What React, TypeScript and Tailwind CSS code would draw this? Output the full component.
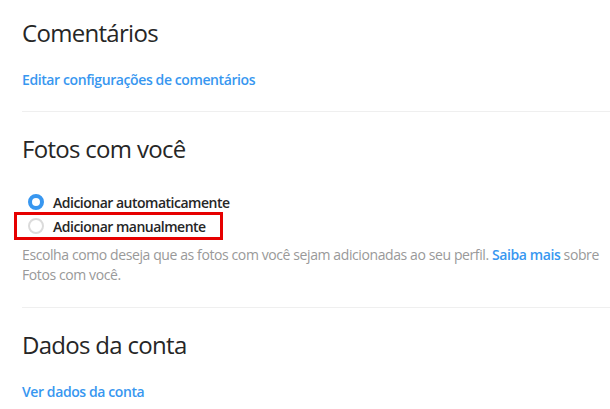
import React from 'react';

const font = { fontFamily: '"Open Sans", "Noto Sans", sans-serif' };

const Radio: React.FC<{ checked?: boolean; label: string }> = ({ checked, label }) => (
    <label className="flex items-center h-[22px] gap-[9px] text-[14px] font-semibold tracking-[-0.5px] text-[#262626]">
        {checked ? (
            <span className="w-[16px] h-[16px] rounded-full border-[4px] border-[#3897f0] bg-white" />
        ) : (
            <span className="w-[16px] h-[16px] rounded-full border-[2px] border-[#dbdbdb] bg-white" />
        )}
        {label}
    </label>
);

const App: React.FC = () => {
    return (
        <div className="w-[610px] h-[409px] overflow-hidden bg-white pl-[22px]" style={font}>
            <h2 className="pt-[18px] text-[24px] leading-[30px] font-normal tracking-[-0.7px] text-[#262626]">
                Comentários
            </h2>
            <a className="block mt-[22px] text-[14px] leading-[20px] font-semibold tracking-[-0.4px] text-[#3897f0]">
                Editar configurações de comentários
            </a>
            <div className="mt-[21px] border-t border-[#efefef]" />

            <h2 className="mt-[22px] text-[24px] leading-[30px] font-normal tracking-[-0.7px] text-[#262626]">
                Fotos com você
            </h2>
            <div className="mt-[27px] pl-[6px]">
                <Radio checked label="Adicionar automaticamente" />
            </div>
            <div className="-ml-[8px] -mt-[1px] w-[209px] border-[3px] border-[#e60000] pl-[11px]">
                <Radio label="Adicionar manualmente" />
            </div>
            <p className="mt-[5px] w-[584px] text-[14px] leading-[20px] tracking-[-0.4px] text-[#999999]">
                Escolha como deseja que as fotos com você sejam adicionadas ao seu perfil.{' '}
                <a className="font-semibold text-[#3897f0]">Saiba mais</a> sobre Fotos com você.
            </p>
            <div className="mt-[22px] border-t border-[#efefef]" />

            <h2 className="mt-[22px] text-[24px] leading-[30px] font-normal tracking-[-0.7px] text-[#262626]">
                Dados da conta
            </h2>
            <a className="block mt-[22px] text-[14px] leading-[20px] font-semibold tracking-[-0.4px] text-[#3897f0]">
                Ver dados da conta
            </a>
        </div>
    );
};

export default App;
